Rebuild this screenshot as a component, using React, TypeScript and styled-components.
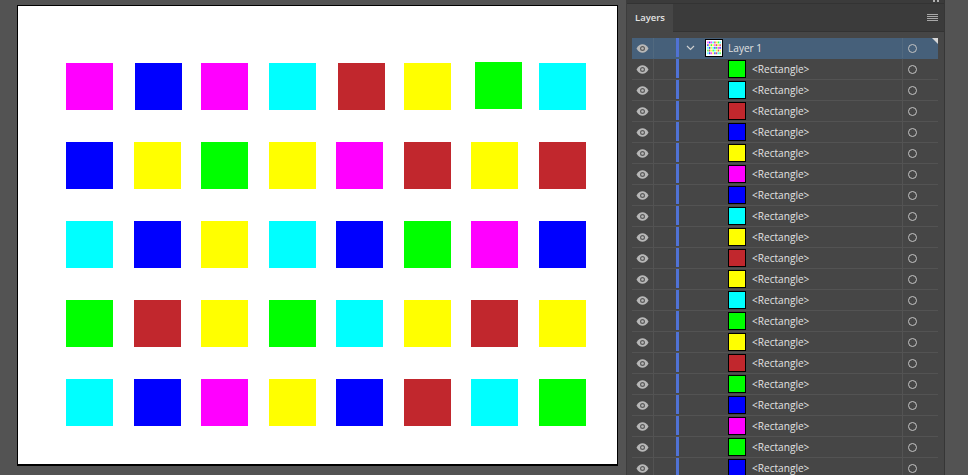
import styled, { createGlobalStyle } from "styled-components";

const colors: any = {
  M: "#ff00ff",
  B: "#0000ff",
  C: "#00ffff",
  R: "#c1272d",
  Y: "#ffff00",
  G: "#00ff00",
};

const board = ["MBMCRYGC", "BYGYMRYR", "CBYCBGMB", "GRYGCYRY", "CBMYBRCG"];
const layers = "GCRBYMBCYRYCGYRGBMGB".split("");

const GlobalStyle = createGlobalStyle`
  html, body {
    margin: 0;
    padding: 0;
    background: #535353;
    font-family: "Open Sans", "Noto Sans", sans-serif;
  }
`;

const Page = styled.div`
  display: flex;
  width: 968px;
  height: 475px;
  overflow: hidden;
  background: #535353;
`;

const Workspace = styled.div`
  width: 626px;
  flex: none;
  padding: 5px 0 0 17px;
  box-sizing: border-box;
`;

const Artboard = styled.div`
  width: 601px;
  height: 461px;
  box-sizing: border-box;
  border: 1px solid #000;
  border-bottom-width: 2px;
  background: #fff;
  padding: 57px 31px 0 48px;
  display: grid;
  grid-template-columns: repeat(8, 47px);
  grid-auto-rows: 47px;
  justify-content: space-between;
  row-gap: 32px;
`;

const Square = styled.div<{ $color: string; $dx: number; $dy: number }>`
  background: ${(p) => p.$color};
  transform: translate(${(p) => p.$dx}px, ${(p) => p.$dy}px);
`;

const Panel = styled.div`
  width: 319px;
  flex: none;
  background: #464646;
  border-left: 1px solid #3c3c3c;
  border-right: 1px solid #363636;
  box-sizing: border-box;
`;

const TopStrip = styled.div`
  height: 3px;
  background: #3b3b3b;
  display: flex;
  justify-content: flex-end;
  gap: 2px;
  padding-right: 5px;
`;

const Notch = styled.div`
  width: 2px;
  height: 2px;
  background: #b0b0b0;
`;

const TabBar = styled.div`
  height: 27px;
  background: #3b3b3b;
  display: flex;
  justify-content: space-between;
  align-items: center;
  padding-right: 6px;
  border-top: 1px solid #333;
  border-bottom: 1px solid #333;
`;

const Tab = styled.div`
  width: 46px;
  height: 28px;
  background: #464646;
  color: #e4e4e4;
  font-size: 9.5px;
  font-weight: 600;
  line-height: 27px;
  text-align: center;
  box-sizing: border-box;
`;

const MenuLines = styled.div`
  width: 11px;
  height: 5px;
  border-top: 1px solid #a8a8a8;
  border-bottom: 1px solid #a8a8a8;
  position: relative;
  &::after {
    content: "";
    position: absolute;
    left: 0;
    right: 0;
    top: 1px;
    height: 1px;
    border-top: 1px solid #a8a8a8;
    border-bottom: 1px solid #a8a8a8;
  }
`;

const LayerList = styled.div`
  margin: 6px 0 0 5px;
  width: 306px;
`;

const Row = styled.div<{ $top?: boolean }>`
  height: 21px;
  box-sizing: border-box;
  display: flex;
  align-items: center;
  position: relative;
  border-bottom: 1px solid ${(p) => (p.$top ? "#46607a" : "#535353")};
  background: ${(p) => (p.$top ? "#46607a" : "#464646")};
`;

const EyeCell = styled.div<{ $top?: boolean }>`
  width: 22px;
  height: 100%;
  display: flex;
  align-items: center;
  justify-content: center;
  box-sizing: border-box;
  border-right: 1px solid ${(p) => (p.$top ? "#51697f" : "#535353")};
`;

const MarkCell = styled.div`
  width: 30px;
  height: 100%;
  flex: none;
  padding-left: 22px;
  box-sizing: border-box;
`;

const ColorBar = styled.div`
  width: 3px;
  height: 19px;
  background: #5072d4;
`;

const NameCell = styled.div<{ $top?: boolean }>`
  flex: 1;
  height: 100%;
  display: flex;
  align-items: center;
  gap: ${(p) => (p.$top ? "5px" : "6px")};
  padding-left: ${(p) => (p.$top ? "2px" : "44px")};
  border-right: 1px solid ${(p) => (p.$top ? "#51697f" : "#535353")};
  color: #e2e2e2;
  font-size: 10.1px;
  white-space: nowrap;
`;

const Chevron = styled.svg`
  width: 9px;
  height: 6px;
  margin-right: 5px;
`;

const Swatch = styled.div<{ $color: string }>`
  width: 18px;
  height: 18px;
  box-sizing: border-box;
  border: 1px solid #000;
  background: ${(p) => p.$color};
`;

const Thumb = styled.svg`
  width: 18px;
  height: 18px;
  display: block;
  box-sizing: border-box;
  border: 1px solid #000;
  background: #fff;
`;

const TargetCell = styled.div`
  width: 35px;
  height: 100%;
  display: flex;
  align-items: center;
  padding-left: 5px;
  box-sizing: border-box;
`;

const Ring = styled.div`
  width: 7px;
  height: 7px;
  border: 1px solid #c4c4c4;
  border-radius: 50%;
`;

const Corner = styled.div`
  position: absolute;
  top: 0;
  right: 0;
  width: 0;
  height: 0;
  border-top: 6px solid #d8d8d8;
  border-left: 6px solid transparent;
`;

const Eye = () => (
  <svg width="13" height="9" viewBox="0 0 13 9">
    <path d="M0.5 4.5C2.2 1.4 4.2 0.3 6.5 0.3s4.3 1.1 6 4.2c-1.7 3.1-3.7 4.2-6 4.2s-4.3-1.1-6-4.2z" fill="#b8b8b8" />
    <circle cx="6.5" cy="4.5" r="2.5" fill="#5a5a5a" />
    <circle cx="6.5" cy="4.5" r="1.3" fill="#b8b8b8" />
  </svg>
);

const BoardThumb = () => (
  <Thumb viewBox="0 0 16 16">
    {board.map((line, y) =>
      line.split("").map((c, x) => (
        <rect
          key={x + "-" + y}
          x={1.2 + x * 1.75}
          y={1.5 + y * 2.7}
          width="1.4"
          height="1.9"
          fill={colors[c]}
          opacity="0.75"
        />
      ))
    )}
  </Thumb>
);

// small offsets where the shapes on the board are not perfectly aligned
const nudge = (row: number, col: number) => {
  if (row === 0 && col === 1) return { dx: 1, dy: 0 };
  if (row === 0 && col === 4) return { dx: 2, dy: 0 };
  if (row === 0 && col === 6) return { dx: 4, dy: -1 };
  return { dx: 0, dy: 0 };
};

const App = () => {
  return (
    <>
      <GlobalStyle />
      <Page>
        <Workspace>
          <Artboard>
            {board.map((line, row) =>
              line.split("").map((c, col) => {
                const { dx, dy } = nudge(row, col);
                return <Square key={row + "-" + col} $color={colors[c]} $dx={dx} $dy={dy} />;
              })
            )}
          </Artboard>
        </Workspace>
        <Panel>
          <TopStrip>
            <Notch />
            <Notch />
          </TopStrip>
          <TabBar>
            <Tab>Layers</Tab>
            <MenuLines />
          </TabBar>
          <LayerList>
            <Row $top>
              <EyeCell $top>
                <Eye />
              </EyeCell>
              <MarkCell>
                <ColorBar />
              </MarkCell>
              <NameCell $top>
                <Chevron viewBox="0 0 9 6">
                  <path d="M1 1l3.5 3.5L8 1" fill="none" stroke="#d0d0d0" strokeWidth="1.2" />
                </Chevron>
                <BoardThumb />
                <span>Layer 1</span>
              </NameCell>
              <TargetCell>
                <Ring />
              </TargetCell>
              <Corner />
            </Row>
            {layers.map((c, i) => (
              <Row key={i}>
                <EyeCell>
                  <Eye />
                </EyeCell>
                <MarkCell>
                  <ColorBar />
                </MarkCell>
                <NameCell>
                  <Swatch $color={colors[c]} />
                  <span>{"<Rectangle>"}</span>
                </NameCell>
                <TargetCell>
                  <Ring />
                </TargetCell>
              </Row>
            ))}
          </LayerList>
        </Panel>
      </Page>
    </>
  );
};

export default App;
